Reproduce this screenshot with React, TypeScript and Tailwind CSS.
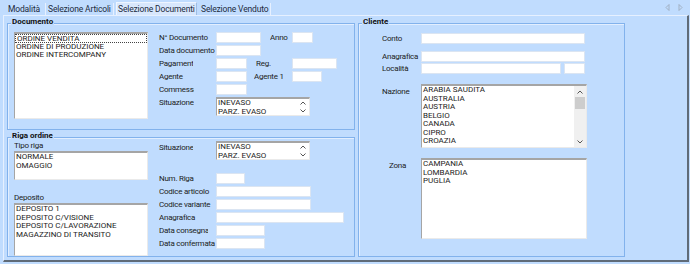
import React from "react";

function Field({ className }: { className: string }) {
  return <div className={`h-[11px] bg-white border border-[#dbe5f2] shrink-0 ${className}`} />;
}

function Lbl({ children, className = "" }: { children: React.ReactNode; className?: string }) {
  return (
    <div
      className={`text-[8px] tracking-[-0.25px] leading-[11px] whitespace-nowrap overflow-hidden shrink-0 ${className}`}
    >
      {children}
    </div>
  );
}

function Chevron({ up }: { up?: boolean }) {
  return (
    <svg width="6" height="4" viewBox="0 0 6 4" className="block">
      {up ? (
        <path d="M0.5 3.5 L3 1 L5.5 3.5" fill="none" stroke="#555" strokeWidth="1" />
      ) : (
        <path d="M0.5 0.5 L3 3 L5.5 0.5" fill="none" stroke="#555" strokeWidth="1" />
      )}
    </svg>
  );
}

function ListBox({
  items,
  className,
  focusFirst,
  arrows,
  scrollbar,
}: {
  items: string[];
  className: string;
  focusFirst?: boolean;
  arrows?: boolean;
  scrollbar?: boolean;
}) {
  return (
    <div
      className={`flex bg-white border-t-2 border-l border-t-[#a5a5a5] border-l-[#a5a5a5] border-r border-b border-r-[#eaeaea] border-b-[#eaeaea] overflow-hidden shrink-0 ${className}`}
    >
      <div className="flex-1 min-w-0">
        {items.map((it, i) => (
          <div
            key={it}
            className={`h-[8.5px] leading-[8.5px] text-[8px] pl-[1px] whitespace-nowrap text-[#1c1c1c] ${
              focusFirst && i === 0 ? "border border-dotted border-[#444] leading-[6.5px]" : ""
            }`}
          >
            {it}
          </div>
        ))}
      </div>
      {arrows && (
        <div className="w-[12px] flex flex-col items-center justify-between py-[2px]">
          <Chevron up />
          <Chevron />
        </div>
      )}
      {scrollbar && (
        <div className="w-[12px] bg-[#f0f0f0] flex flex-col items-center">
          <div className="h-[11px] flex items-center justify-center">
            <Chevron up />
          </div>
          <div className="w-[10px] h-[12px] bg-[#cdcdcd]" />
          <div className="mt-auto h-[11px] flex items-center justify-center">
            <Chevron />
          </div>
        </div>
      )}
    </div>
  );
}

function Group({ title, className, children }: { title: string; className: string; children: React.ReactNode }) {
  return (
    <div className={`relative border border-[#82b2ec] shadow-[inset_1px_1px_0_#e2eeff] shrink-0 ${className}`}>
      <span className="absolute left-[3px] top-[-7px] px-[1px] bg-[#c0dcfe] text-[8px] leading-[10px] font-bold text-[#111] whitespace-nowrap">
        {title}
      </span>
      {children}
    </div>
  );
}

function Documento() {
  return (
    <Group title="Documento" className="w-[348px] h-[107px]">
      <div className="flex items-start pl-[6px] pt-[8px]">
        <ListBox
          items={["ORDINE VENDITA", "ORDINE DI PRODUZIONE", "ORDINE INTERCOMPANY"]}
          className="w-[134px] h-[87px]"
          focusFirst
        />
        <div className="ml-[11px] flex flex-col gap-[2px]">
          <div className="flex items-center h-[11px]">
            <div className="w-[57px] shrink-0">
              <Lbl>N° Documento</Lbl>
            </div>
            <Field className="w-[45px]" />
            <Lbl className="ml-[9px] w-[22px]">Anno</Lbl>
            <Field className="w-[21px]" />
          </div>
          <div className="flex items-center h-[11px]">
            <div className="w-[57px] shrink-0">
              <Lbl>Data documento</Lbl>
            </div>
            <Field className="w-[45px]" />
          </div>
          <div className="flex items-center h-[11px]">
            <div className="w-[57px] shrink-0">
              <Lbl className="w-[34px]">Pagamenti</Lbl>
            </div>
            <Field className="w-[31px]" />
            <Lbl className="ml-[9px] w-[36px]">Reg.</Lbl>
            <Field className="w-[45px]" />
          </div>
          <div className="flex items-center h-[11px]">
            <div className="w-[57px] shrink-0">
              <Lbl className="w-[36px]">Agente</Lbl>
            </div>
            <Field className="w-[31px]" />
            <Lbl className="ml-[7px] w-[38px]">Agente 1</Lbl>
            <Field className="w-[30px]" />
          </div>
          <div className="flex items-center h-[11px]">
            <div className="w-[57px] shrink-0">
              <Lbl className="w-[35px]">Commessa</Lbl>
            </div>
            <Field className="w-[31px]" />
          </div>
          <div className="flex items-start">
            <div className="w-[57px] shrink-0">
              <Lbl className="w-[35px] leading-[9px]">Situazione</Lbl>
            </div>
            <ListBox items={["INEVASO", "PARZ. EVASO"]} className="w-[94px] h-[19px]" arrows />
          </div>
        </div>
      </div>
    </Group>
  );
}

function RigaOrdine() {
  return (
    <Group title="Riga ordine" className="w-[348px] h-[120px]">
      <div className="flex items-start pl-[6px] pt-[2px]">
        <div className="flex flex-col w-[134px] shrink-0">
          <Lbl className="leading-[8px]">Tipo riga</Lbl>
          <ListBox items={["NORMALE", "OMAGGIO"]} className="w-[134px] h-[29px]" />
          <Lbl className="leading-[8px] mt-[12px]">Deposito</Lbl>
          <ListBox
            items={["DEPOSITO 1", "DEPOSITO C/VISIONE", "DEPOSITO C/LAVORAZIONE", "MAGAZZINO DI TRANSITO"]}
            className="w-[134px] h-[53px]"
          />
        </div>
        <div className="ml-[11px] flex flex-col gap-[2px] pt-[1px]">
          <div className="flex items-start">
            <div className="w-[57px] shrink-0 pt-[1px]">
              <Lbl className="w-[34px] leading-[9px]">Situazione</Lbl>
            </div>
            <ListBox items={["INEVASO", "PARZ. EVASO"]} className="w-[94px] h-[19px]" arrows />
          </div>
          <div className="flex items-center h-[11px] mt-[11px]">
            <div className="w-[57px] shrink-0">
              <Lbl>Num. Riga</Lbl>
            </div>
            <Field className="w-[29px]" />
          </div>
          <div className="flex items-center h-[11px]">
            <div className="w-[57px] shrink-0">
              <Lbl>Codice articolo</Lbl>
            </div>
            <Field className="w-[95px]" />
          </div>
          <div className="flex items-center h-[11px]">
            <div className="w-[57px] shrink-0">
              <Lbl>Codice variante</Lbl>
            </div>
            <Field className="w-[95px]" />
          </div>
          <div className="flex items-center h-[11px]">
            <div className="w-[57px] shrink-0">
              <Lbl>Anagrafica</Lbl>
            </div>
            <Field className="w-[128px]" />
          </div>
          <div className="flex items-center h-[11px]">
            <div className="w-[57px] shrink-0">
              <Lbl className="w-[49px]">Data consegna</Lbl>
            </div>
            <Field className="w-[49px]" />
          </div>
          <div className="flex items-center h-[11px]">
            <div className="w-[57px] shrink-0">
              <Lbl>Data confermata</Lbl>
            </div>
            <Field className="w-[49px]" />
          </div>
        </div>
      </div>
    </Group>
  );
}

function Cliente() {
  return (
    <Group title="Cliente" className="w-[267px] h-[234px]">
      <div className="flex flex-col pl-[23px] pt-[9px]">
        <div className="flex items-center h-[11px]">
          <Lbl className="w-[39px]">Conto</Lbl>
          <Field className="w-[164px]" />
        </div>
        <div className="flex items-center h-[11px] mt-[7px]">
          <Lbl className="w-[39px]">Anagrafica</Lbl>
          <Field className="w-[164px]" />
        </div>
        <div className="flex items-center h-[11px] mt-[1px]">
          <Lbl className="w-[39px]">Località</Lbl>
          <Field className="w-[140px]" />
          <Field className="w-[21px] ml-[3px]" />
        </div>
        <div className="flex items-start mt-[10px]">
          <Lbl className="w-[39px] leading-[9px] mt-[2px]">Nazione</Lbl>
          <ListBox
            items={["ARABIA SAUDITA", "AUSTRALIA", "AUSTRIA", "BELGIO", "CANADA", "CIPRO", "CROAZIA"]}
            className="w-[166px] h-[64px]"
            scrollbar
          />
        </div>
        <div className="flex items-start mt-[10px]">
          <Lbl className="w-[39px] leading-[9px] mt-[2px] pl-[7px]">Zona</Lbl>
          <ListBox items={["CAMPANIA", "LOMBARDIA", "PUGLIA"]} className="w-[166px] h-[81px]" />
        </div>
      </div>
    </Group>
  );
}

function TabBar() {
  return (
    <div className="h-[15px] flex items-end pl-[3px] text-[8.5px] tracking-[-0.15px] text-[#1d2b40] whitespace-nowrap">
      <div className="h-[12px] w-[43px] shrink-0 pl-[5px] leading-[12px] border-r border-[#e6f0ff]">Modalità</div>
      <div className="h-[12px] w-[68px] shrink-0 pl-[2px] leading-[12px] border-r border-[#e6f0ff]">
        Selezione Articoli
      </div>
      <div className="h-[13px] w-[81px] shrink-0 ml-[2px] pl-[1px] leading-[13px] bg-[#d8e7fc] border-l border-r border-t border-[#eef5ff] border-r-[#9fbde3]">
        Selezione Documenti
      </div>
      <div className="h-[12px] w-[74px] shrink-0 pl-[4px] leading-[12px] border-r border-[#e6f0ff]">
        Selezione Venduto
      </div>
      <div className="ml-auto mr-[7px] mb-[4px] flex gap-[8px]">
        <svg width="5" height="7" viewBox="0 0 5 7">
          <path d="M4 0.5 L1 3.5 L4 6.5 Z" fill="none" stroke="#9aa6b6" strokeWidth="0.8" />
        </svg>
        <svg width="5" height="7" viewBox="0 0 5 7">
          <path d="M1 0.5 L4 3.5 L1 6.5 Z" fill="none" stroke="#9aa6b6" strokeWidth="0.8" />
        </svg>
      </div>
    </div>
  );
}

export default function App() {
  return (
    <div className="w-[690px] h-[264px] bg-[#c0dcfe] font-['Roboto',sans-serif] text-[#1c1c1c] overflow-hidden">
      <TabBar />
      <div className="ml-[3px] w-[686px] h-[247px] border-l border-t border-[#e6f0ff] border-r-2 border-b-2 border-r-[#5f6b78] border-b-[#5f6b78]">
        <div className="flex items-start pl-[3px] pt-[7px] gap-[3px]">
          <div className="flex flex-col gap-[7px]">
            <Documento />
            <RigaOrdine />
          </div>
          <Cliente />
        </div>
      </div>
    </div>
  );
}
